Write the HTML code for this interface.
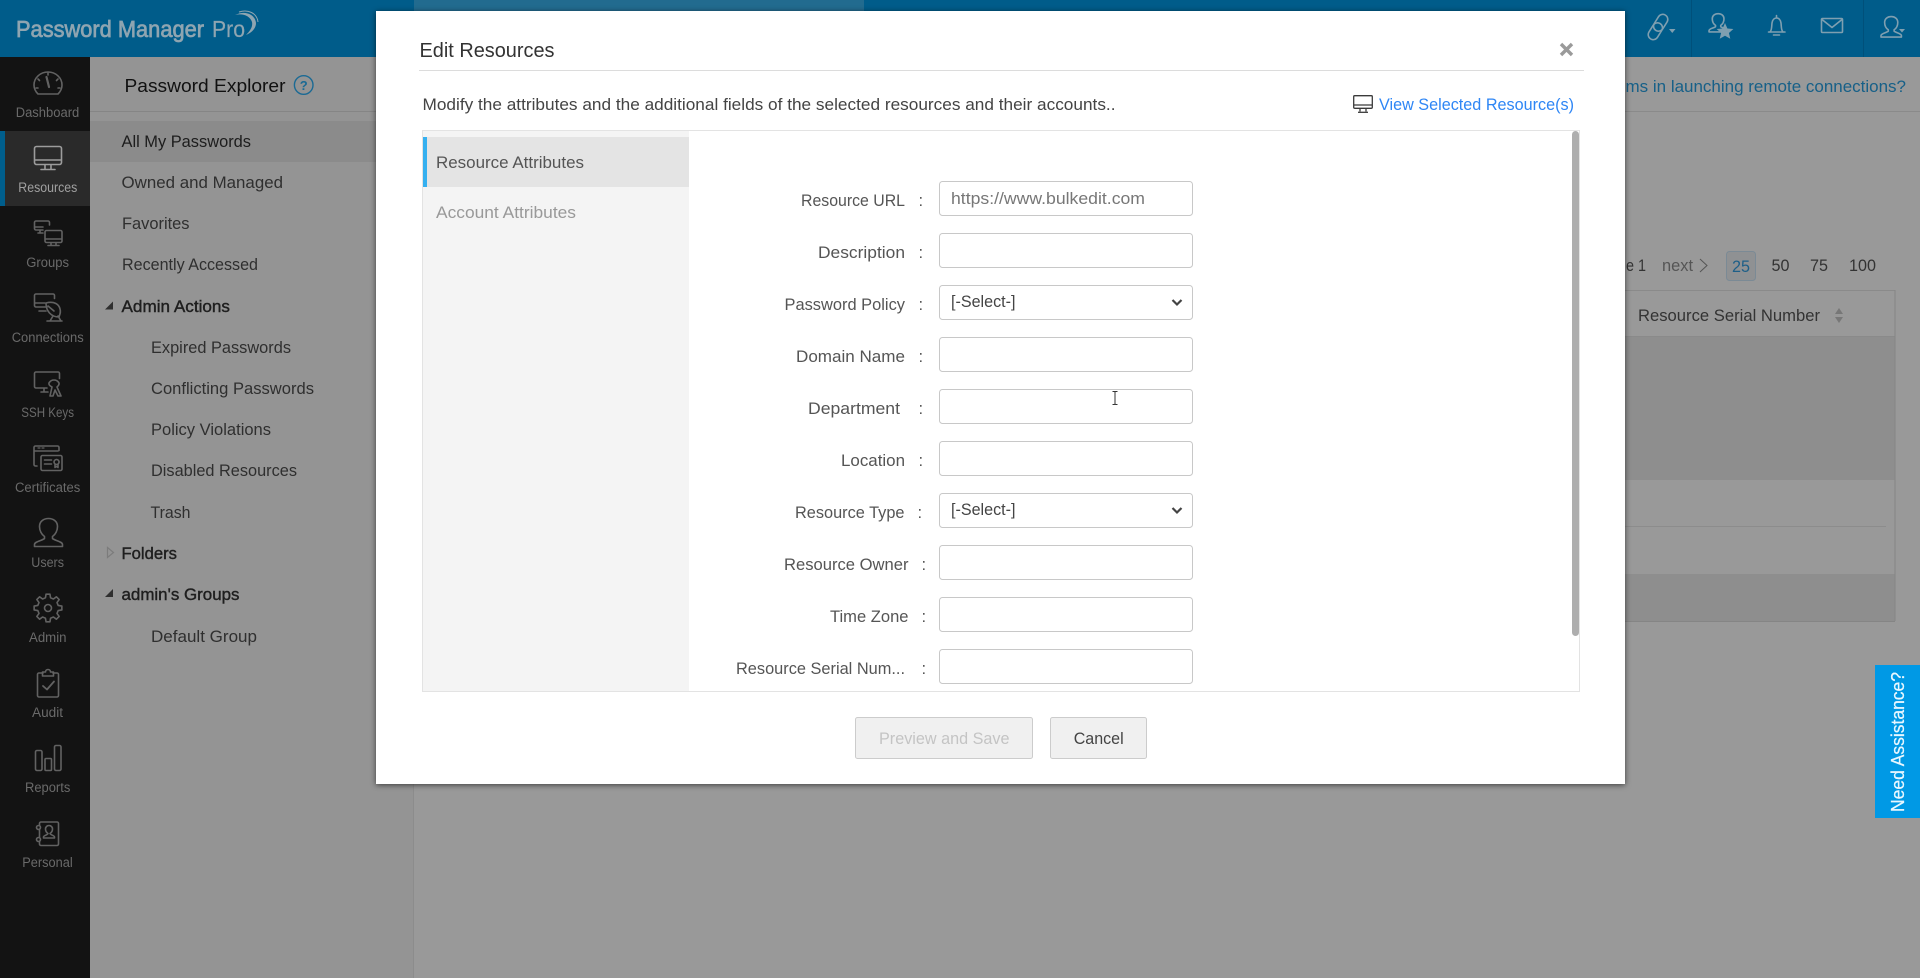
<!DOCTYPE html>
<html lang="en">
<head>
<meta charset="utf-8">
<title>Edit Resources - Password Manager Pro</title>
<style>
html,body{margin:0;padding:0;width:1920px;height:978px;overflow:hidden;background:#999}
svg{display:block;font-family:"Liberation Sans",Arial,sans-serif}
.nav text{font-size:13.5px;fill:#6a6a6a;text-anchor:start}
.ic{fill:none;stroke:#626262;stroke-width:1.6;stroke-linejoin:round;stroke-linecap:round}
.m{font-size:16.5px;fill:#2f2f2f}
.b{font-size:16.5px;fill:#1f1f1f;stroke:#1f1f1f;stroke-width:.4}
.l{font-size:16.5px;fill:#555}
.i{fill:#fff;stroke:#c8c8c8;stroke-width:1}
.h{fill:none;stroke:#7f9fb0;stroke-width:1.6;stroke-linejoin:round;stroke-linecap:round}
</style>
</head>
<body>
<svg width="1920" height="978" viewBox="0 0 1920 978" xmlns="http://www.w3.org/2000/svg">
<!-- base -->
<rect width="1920" height="978" fill="#999"/>
<rect x="90" y="57" width="324" height="921" fill="#949494"/>
<rect x="413" y="57" width="1" height="921" fill="#8c8c8c"/>
<!-- header -->
<rect width="1920" height="57" fill="#005c8a"/>
<rect x="414" width="450" height="11" fill="#226b8f"/>
<rect x="1691" y="0" width="1" height="57" fill="#00507a"/>
<rect x="1863" y="0" width="1" height="57" fill="#00507a"/>
<text x="16" y="37" font-size="23" fill="#8fa5b1" stroke="#8fa5b1" stroke-width=".7" textLength="188" lengthAdjust="spacingAndGlyphs">Password Manager</text>
<text x="212" y="37" font-size="23" fill="#8fa5b1" stroke="#8fa5b1" stroke-width=".2" textLength="33" lengthAdjust="spacingAndGlyphs">Pro</text>
<path d="M235 15 C245 10 255 14 256 23 C256 29 251 33 246 35 C250 31 253 27 252 22 C250 16 243 13 235 15Z" fill="#8fa5b1"/>
<path d="M239 12 C248 9 257 13 258 22" fill="none" stroke="#8fa5b1" stroke-width="1"/>
<!-- header icons -->
<g class="h">
<g transform="rotate(32 1658 27)"><rect x="1653" y="13" width="10" height="18" rx="5"/><rect x="1653" y="23" width="10" height="18" rx="5"/></g>
<path transform="translate(1686.6 -323.35) scale(.65)" stroke-width="2.500" d="M34.500 546.500v-2c0-3 8-4 10-6v-2c-3-2-5-6-5-10 0-5 4-8 9-8s9 3 9 8c0 4-2 8-5 10v2c2 2 10 3 10 6v2z"/>
<path d="M1768.500 32h16.500M1770 32c2-2 1.500-5 2-9 .5-3.500 2.500-5 4.500-5s4 1.500 4.500 5c.5 4 0 7 2 9M1776.500 18v-2.500M1773.500 35h6"/>
<rect x="1821.500" y="18.500" width="21" height="14" rx="1"/><path d="M1822 19.500l10 8 10-8"/>
<path transform="translate(1855.8 -361.9) scale(.73)" stroke-width="2.200" d="M34.500 546.500v-2c0-3 8-4 10-6v-2c-3-2-5-6-5-10 0-5 4-8 9-8s9 3 9 8c0 4-2 8-5 10v2c2 2 10 3 10 6v2z"/>
</g>
<path d="M1669 29h6.500l-3.250 4z" fill="#7f9fb0"/>
<path d="M1899 29h6l-3 3.500z" fill="#7f9fb0"/>
<path d="M1725 23l2.400 5.500 6 .5-4.500 4 1.400 5.800-5.300-3-5.300 3 1.400-5.800-4.500-4 6-.5z" fill="#7f9fb0"/>
<!-- nav -->
<rect y="57" width="90" height="921" fill="#131313"/>
<rect y="131" width="90" height="75" fill="#2a2a2a"/>
<rect y="131" width="5" height="75" fill="#005e8c"/>
<g class="nav">
<text x="15.700" y="117" textLength="63.600" lengthAdjust="spacingAndGlyphs">Dashboard</text>
<text x="18.300" y="192" textLength="59" lengthAdjust="spacingAndGlyphs" style="fill:#a0a0a0">Resources</text>
<text x="26.300" y="267" textLength="42.700" lengthAdjust="spacingAndGlyphs">Groups</text>
<text x="11.700" y="342" textLength="72" lengthAdjust="spacingAndGlyphs">Connections</text>
<text x="21.300" y="417" textLength="52.700" lengthAdjust="spacingAndGlyphs">SSH Keys</text>
<text x="15" y="492" textLength="65.300" lengthAdjust="spacingAndGlyphs">Certificates</text>
<text x="31.300" y="567" textLength="32.700" lengthAdjust="spacingAndGlyphs">Users</text>
<text x="29" y="642" textLength="37.500" lengthAdjust="spacingAndGlyphs">Admin</text>
<text x="32" y="717" textLength="31" lengthAdjust="spacingAndGlyphs">Audit</text>
<text x="25" y="792" textLength="45.300" lengthAdjust="spacingAndGlyphs">Reports</text>
<text x="22.300" y="867" textLength="50.400" lengthAdjust="spacingAndGlyphs">Personal</text>
</g>
<g class="ic">
<!-- dashboard -->
<path d="M38 94h20c3-3 4-6 4-9a14 13 0 0 0-28 0c0 3 1 6 4 9z"/>
<path d="M46.500 77l2.500 10" stroke-width="2.200"/>
<path d="M48 73v2M38 79l1.500 1.500M58 79l-1.500 1.500M36 88h2M58 88h2"/>
<!-- resources -->
<g stroke="#9c9c9c">
<rect x="34.500" y="146.500" width="27" height="18" rx="2"/><path d="M35 160h26M45 165v4M51 165v4M41 169.500h14"/>
</g>
<!-- groups -->
<path d="M43 230h-7a1.500 1.500 0 0 1-1.500-1.500v-6a1.500 1.500 0 0 1 1.500-1.500h12a1.500 1.500 0 0 1 1.500 1.500v2.500M35 227h8M38 233h5M40 230v3"/>
<rect x="45" y="230.500" width="17" height="12" rx="1.500"/><path d="M45.500 239h16M51 243v2M56 243v2M48 245.500h11"/>
<!-- connections -->
<path d="M47 307h-11a1.500 1.500 0 0 1-1.500-1.500v-10a1.500 1.500 0 0 1 1.500-1.500h17a1.500 1.500 0 0 1 1.500 1.500v3M35 303h10M39 311h7"/>
<path d="M46 303c0 8 5 14 13 14 1-3 2-5 1-8-1-5-6-8-14-6zM48 306l6 5M53 316l-3 5M58 316l3 5M47 321h15"/>
<!-- ssh -->
<path d="M47 388h-11a1.500 1.500 0 0 1-1.500-1.500v-13a1.500 1.500 0 0 1 1.500-1.500h22a1.500 1.500 0 0 1 1.500 1.500v5M41 392h7M44 388v4"/>
<path d="M49 383c2-4 8-4 10 0 .500 2-1 3-2 4l4 9h-3l-3-6-2 6h-3l2-9c-2-1-3.500-2-3-4z"/>
<!-- cert -->
<path d="M37 466h-1.500a1.500 1.500 0 0 1-1.500-1.500v-17a1.500 1.500 0 0 1 1.500-1.500h22a1.500 1.500 0 0 1 1.500 1.500v3M34 451h24"/>
<path d="M38 448h2M42 448h2" stroke-width="1.200"/>
<rect x="41" y="455.500" width="21" height="15" rx="1.500"/><path d="M44.500 460h7M44.500 464h7M56.500 459.500a2.500 2.500 0 1 0 .1 0M55 464.500v3l1.500-1 1.500 1v-3"/>
<!-- users -->
<path d="M34.500 546.500v-2c0-3 8-4 10-6v-2c-3-2-5-6-5-10 0-5 4-8 9-8s9 3 9 8c0 4-2 8-5 10v2c2 2 10 3 10 6v2z"/>
<!-- admin gear -->
<g transform="translate(48 608)">
<path d="M-2.540-10.190L-1.950-13.860H1.950L2.540-10.190L5.410-9L8.420-11.180L11.180-8.420L9-5.410L10.190-2.540L13.860-1.950V1.950L10.190 2.540L9 5.410L11.180 8.420L8.420 11.180L5.410 9L2.540 10.190L1.950 13.860H-1.950L-2.540 10.190L-5.410 9L-8.420 11.180L-11.180 8.420L-9 5.410L-10.190 2.540L-13.860 1.950V-1.950L-10.190-2.540L-9-5.410L-11.180-8.420L-8.420-11.180L-5.410-9Z"/>
<circle r="3.500"/>
</g>
<!-- audit -->
<path d="M43 673h-4a1.500 1.500 0 0 0-1.500 1.500v21a1.500 1.500 0 0 0 1.500 1.500h18a1.500 1.500 0 0 0 1.500-1.500v-21a1.500 1.500 0 0 0-1.500-1.500h-4"/>
<path d="M42.500 672h3a2.500 2.500 0 0 1 5 0h3v4h-11z"/>
<path d="M43 686l4 3.500 7-8" stroke-width="1.800"/>
<!-- reports -->
<rect x="35.500" y="750.500" width="6.500" height="20" rx="1.500"/>
<rect x="45" y="758.500" width="6.500" height="12" rx="1"/>
<rect x="54.500" y="745.500" width="6.500" height="25" rx="1.500"/>
<!-- personal -->
<rect x="39.500" y="822" width="19" height="23.500" rx="1.500"/>
<path d="M43.500 838v-1c0-1.500 4-2 4.500-3.500-1.500-1-2.500-2.500-2.500-4.500 0-2 1.500-3.500 3.500-3.500s3.500 1.500 3.500 3.500c0 2-1 3.500-2.500 4.500.5 1.500 4.500 2 4.500 3.500v1z"/>
<circle cx="38.500" cy="827.500" r="2" fill="#131313"/><circle cx="38.500" cy="839.500" r="2" fill="#131313"/>
</g>
<!-- explorer -->
<rect x="90" y="121" width="324" height="41" fill="#8b8b8b"/>
<rect x="90" y="111" width="324" height="1" fill="#858585"/>
<text x="124.500" y="92" font-size="18.500" fill="#111" textLength="161" lengthAdjust="spacingAndGlyphs">Password Explorer</text>
<circle cx="303.700" cy="85" r="9.300" fill="none" stroke="#1b6a94" stroke-width="1.400"/>
<text x="303.700" y="90" font-size="13" font-weight="bold" fill="#1b6a94" text-anchor="middle">?</text>
<text class="m" x="121.500" y="147" textLength="129.500" lengthAdjust="spacingAndGlyphs" style="fill:#1d1d1d">All My Passwords</text>
<text class="m" x="121.500" y="188" textLength="161.500" lengthAdjust="spacingAndGlyphs">Owned and Managed</text>
<text class="m" x="122" y="229" textLength="67.500" lengthAdjust="spacingAndGlyphs">Favorites</text>
<text class="m" x="122" y="270" textLength="136" lengthAdjust="spacingAndGlyphs">Recently Accessed</text>
<text class="b" x="121.500" y="312" textLength="108.500" lengthAdjust="spacingAndGlyphs">Admin Actions</text>
<text class="m" x="151" y="353" textLength="140" lengthAdjust="spacingAndGlyphs">Expired Passwords</text>
<text class="m" x="151" y="394" textLength="163" lengthAdjust="spacingAndGlyphs">Conflicting Passwords</text>
<text class="m" x="151" y="435" textLength="120" lengthAdjust="spacingAndGlyphs">Policy Violations</text>
<text class="m" x="151" y="476" textLength="146" lengthAdjust="spacingAndGlyphs">Disabled Resources</text>
<text class="m" x="150.500" y="518" textLength="40" lengthAdjust="spacingAndGlyphs">Trash</text>
<text class="b" x="121.500" y="559" textLength="55.500" lengthAdjust="spacingAndGlyphs">Folders</text>
<text class="b" x="121.500" y="600" textLength="118" lengthAdjust="spacingAndGlyphs">admin's Groups</text>
<text class="m" x="151" y="642" textLength="106" lengthAdjust="spacingAndGlyphs">Default Group</text>
<path d="M113 301.500v8h-8z" fill="#2f2f2f"/>
<path d="M113 589v8h-8z" fill="#2f2f2f"/>
<path d="M107.500 547.500l6 5-6 5z" fill="none" stroke="#7c7c7c" stroke-width="1.200"/>
<!-- right content -->
<rect x="414" y="111" width="1506" height="1" fill="#8a8a8a"/>
<text x="1625.500" y="92" font-size="16.500" fill="#176088" textLength="280.500" lengthAdjust="spacingAndGlyphs">ms in launching remote connections?</text>
<text x="1626" y="271" font-size="16.500" fill="#333" textLength="20" lengthAdjust="spacingAndGlyphs">e 1</text>
<text x="1662" y="271" font-size="16.500" fill="#555" textLength="31" lengthAdjust="spacingAndGlyphs">next</text>
<path d="M1700 259l7 6.500-7 6.500" fill="none" stroke="#555" stroke-width="1"/>
<rect x="1726.500" y="251.500" width="29" height="29" rx="3" fill="#8f9193" stroke="#7b8a95"/>
<text x="1732" y="272" font-size="16.500" fill="#1e5f88" textLength="18" lengthAdjust="spacingAndGlyphs">25</text>
<text x="1771.500" y="271" font-size="16.500" fill="#333" textLength="18" lengthAdjust="spacingAndGlyphs">50</text>
<text x="1810" y="271" font-size="16.500" fill="#333" textLength="18" lengthAdjust="spacingAndGlyphs">75</text>
<text x="1849" y="271" font-size="16.500" fill="#333" textLength="27" lengthAdjust="spacingAndGlyphs">100</text>
<rect x="1625" y="290" width="270" height="1" fill="#8a8a8a"/>
<rect x="1625" y="336" width="270" height="1" fill="#8a8a8a"/>
<rect x="1625" y="337" width="270" height="143" fill="#8e8e8e"/>
<rect x="1625" y="574" width="270" height="47" fill="#8e8e8e"/>
<rect x="1625" y="526" width="261" height="1" fill="#8c8c8c"/>
<rect x="1894.500" y="290" width="1" height="331" fill="#858585"/>
<rect x="1625" y="621" width="270" height="1" fill="#858585"/>
<text x="1638" y="321" font-size="16.500" fill="#333" textLength="182" lengthAdjust="spacingAndGlyphs">Resource Serial Number</text>
<path d="M1835 314l4-6 4 6zM1835 317l4 6 4-6z" fill="#777"/>
<!-- need assistance -->
<rect x="1875" y="665" width="45" height="153" fill="#0099e5"/>
<text transform="translate(1904 812) rotate(-90)" font-size="18.500" fill="#e8f7ff" stroke="#e8f7ff" stroke-width=".25" textLength="140" lengthAdjust="spacingAndGlyphs">Need Assistance?</text>
<!-- modal -->
<rect x="376" y="11" width="1249" height="773" fill="#fff" style="filter:drop-shadow(0 1px 3px rgba(0,0,0,.6))"/>
<text x="419.500" y="57" font-size="20.500" fill="#333" textLength="135" lengthAdjust="spacingAndGlyphs">Edit Resources</text>
<rect x="419" y="70" width="1165" height="1" fill="#dcdcdc"/>
<path d="M1561 44l11 11M1572 44l-11 11" stroke="#9a9a9a" stroke-width="3.400"/>
<text x="422.500" y="110" font-size="16.500" fill="#444" textLength="693" lengthAdjust="spacingAndGlyphs">Modify the attributes and the additional fields of the selected resources and their accounts..</text>
<g fill="none" stroke="#3a3a3a" stroke-width="1.300">
<rect x="1353.700" y="95.700" width="18.600" height="12.600" rx="1"/><path d="M1354 105h18M1360 108.500v3M1366 108.500v3"/><path d="M1358 112.300h10" />
</g>
<text x="1379" y="110" font-size="16.500" fill="#2e86f5" textLength="195" lengthAdjust="spacingAndGlyphs">View Selected Resource(s)</text>
<!-- box -->
<rect x="422.500" y="130.500" width="1157" height="561" fill="#fff" stroke="#e3e3e3"/>
<rect x="423" y="131" width="266" height="560" fill="#f4f4f4"/>
<rect x="423" y="137" width="266" height="50" fill="#e4e4e4"/>
<rect x="423" y="137" width="4" height="50" fill="#35b0f0"/>
<text x="436" y="168" font-size="16.500" fill="#555" textLength="148" lengthAdjust="spacingAndGlyphs">Resource Attributes</text>
<text x="436" y="218" font-size="16.500" fill="#999" textLength="140" lengthAdjust="spacingAndGlyphs">Account Attributes</text>
<rect x="1572" y="131" width="7" height="505" rx="3.500" fill="#aeaeae"/>
<!-- labels -->
<text class="l" x="801" y="206" textLength="104" lengthAdjust="spacingAndGlyphs">Resource URL</text><text class="l" x="918.500" y="206">:</text>
<text class="l" x="818" y="258" textLength="87" lengthAdjust="spacingAndGlyphs">Description</text><text class="l" x="918.500" y="258">:</text>
<text class="l" x="784.500" y="310" textLength="120.500" lengthAdjust="spacingAndGlyphs">Password Policy</text><text class="l" x="918.500" y="310">:</text>
<text class="l" x="796" y="362" textLength="109" lengthAdjust="spacingAndGlyphs">Domain Name</text><text class="l" x="918.500" y="362">:</text>
<text class="l" x="808" y="414" textLength="92" lengthAdjust="spacingAndGlyphs">Department</text><text class="l" x="918.500" y="414">:</text>
<text class="l" x="841" y="466" textLength="64" lengthAdjust="spacingAndGlyphs">Location</text><text class="l" x="918.500" y="466">:</text>
<text class="l" x="795" y="518" textLength="109.500" lengthAdjust="spacingAndGlyphs">Resource Type</text><text class="l" x="917.500" y="518">:</text>
<text class="l" x="784" y="570" textLength="124.500" lengthAdjust="spacingAndGlyphs">Resource Owner</text><text class="l" x="921.500" y="570">:</text>
<text class="l" x="830" y="622" textLength="78.500" lengthAdjust="spacingAndGlyphs">Time Zone</text><text class="l" x="921.500" y="622">:</text>
<text class="l" x="736" y="674" textLength="169" lengthAdjust="spacingAndGlyphs">Resource Serial Num...</text><text class="l" x="921.500" y="674">:</text>
<!-- inputs -->
<rect class="i" x="939.500" y="181.500" width="253" height="34" rx="3"/>
<rect class="i" x="939.500" y="233.500" width="253" height="34" rx="3"/>
<rect class="i" x="939.500" y="285.500" width="253" height="34" rx="3"/>
<rect class="i" x="939.500" y="337.500" width="253" height="34" rx="3"/>
<rect class="i" x="939.500" y="389.500" width="253" height="34" rx="3"/>
<rect class="i" x="939.500" y="441.500" width="253" height="34" rx="3"/>
<rect class="i" x="939.500" y="493.500" width="253" height="34" rx="3"/>
<rect class="i" x="939.500" y="545.500" width="253" height="34" rx="3"/>
<rect class="i" x="939.500" y="597.500" width="253" height="34" rx="3"/>
<rect class="i" x="939.500" y="649.500" width="253" height="34" rx="3"/>
<text x="951" y="204" font-size="16.500" fill="#777" textLength="194" lengthAdjust="spacingAndGlyphs">https://www.bulkedit.com</text>
<text x="951" y="307" font-size="16.500" fill="#444" textLength="64.500" lengthAdjust="spacingAndGlyphs">[-Select-]</text>
<text x="951" y="515" font-size="16.500" fill="#444" textLength="64.500" lengthAdjust="spacingAndGlyphs">[-Select-]</text>
<path d="M1172.500 300l4.500 4.500 4.500-4.500M1172.500 508l4.500 4.500 4.500-4.500" fill="none" stroke="#444" stroke-width="2.200"/>
<!-- cursor -->
<path d="M1112.500 391.500h2l.5.500.5-.5h2M1115 392v12M1112.500 404.500h2l.5-.5.5.5h2" fill="none" stroke="#333" stroke-width="1"/>
<!-- buttons -->
<rect x="855.500" y="717.500" width="177" height="41" rx="2" fill="#f0f0f0" stroke="#ccc"/>
<text x="879" y="744" font-size="16.500" fill="#c4c4c4" textLength="130.500" lengthAdjust="spacingAndGlyphs">Preview and Save</text>
<rect x="1050.500" y="717.500" width="96" height="41" rx="2" fill="#f0f0f0" stroke="#ccc"/>
<text x="1073.700" y="744" font-size="16.500" fill="#444" textLength="50" lengthAdjust="spacingAndGlyphs">Cancel</text>
</svg>
</body>
</html>
